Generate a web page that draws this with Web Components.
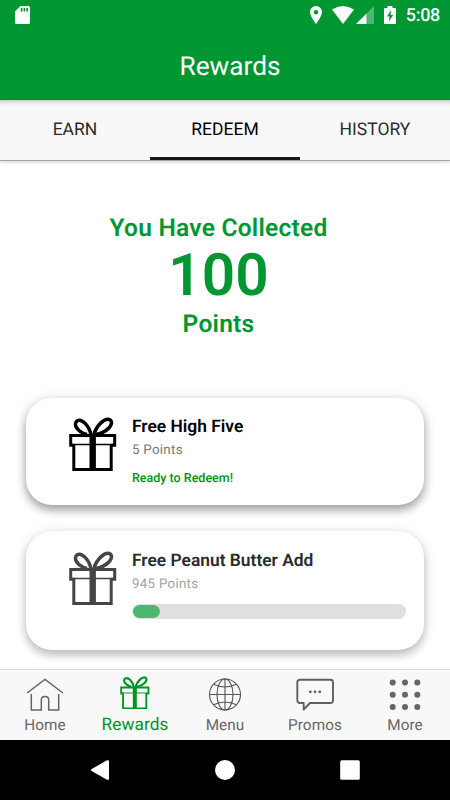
<!DOCTYPE html>
<html lang="en">
<head>
<meta charset="UTF-8">
<meta name="viewport" content="width=device-width, initial-scale=1">
<title>Rewards</title>
<style>
    body {
        margin: 0;
        background: #fff;
        font-family: Roboto, sans-serif;
        text-rendering: geometricPrecision;
    }
</style>
</head>
<body>
<rewards-app></rewards-app>

<script>
class GiftIcon extends HTMLElement {
    constructor() {
        super();
        this.attachShadow({ mode: 'open' });
        this.shadowRoot.innerHTML = `
            <style>
                :host { display: block; }
                svg { display: block; width: 100%; height: 100%; }
            </style>
            <svg viewBox="0 0 48 54" fill="none" stroke="currentColor">
                <path d="M4.8 28V52.4H42.2V28" stroke-width="3"/>
                <path d="M5 28.2H1.7V18.5H45.7V28.2H42.4" stroke-width="3"/>
                <path d="M3 27.4H45" stroke-width="1.5"/>
                <path d="M23.7 17V53" stroke-width="6.4"/>
                <path d="M22 18C20.5 9 13 1.4 8.3 3.8C3.5 7 8.5 15 18 17.5" stroke-width="3.5"/>
                <path d="M25 17.5C27 9 36 -.2 41.3 3C45.8 7.5 37 16 26.5 17.5" stroke-width="3.5"/>
            </svg>
        `;
    }
}

class StatusBar extends HTMLElement {
    constructor() {
        super();
        this.attachShadow({ mode: 'open' });
        this.shadowRoot.innerHTML = `
            <style>
                :host {
                    display: flex;
                    justify-content: space-between;
                    align-items: center;
                    height: 30px;
                    padding: 0 10px 0 15px;
                    color: #fff;
                }
                svg { display: block; }
                .right { display: flex; align-items: center; }
                .pin { margin-right: 10px; }
                .wifi { margin-right: 2px; }
                .signal { margin-right: 10px; }
                .battery { margin-right: 10px; }
                .time {
                    padding-top: 1px;
                    font-size: 18px;
                    font-weight: 500;
                    line-height: 31px;
                    letter-spacing: -0.3px;
                }
            </style>
            <svg width="15" height="18" viewBox="0 0 15 18">
                <path fill="#fff" fill-rule="evenodd" d="M5.5 0H13.5Q15 0 15 1.5V16.5Q15 18 13.5 18H1.5Q0 18 0 16.5V5.5ZM5.7 2V5.5H7.5V2ZM8.6 2V5.5H10.2V2ZM11.3 2V5.5H13V2Z"/>
            </svg>
            <div class="right">
                <svg class="pin" width="12" height="18" viewBox="0 0 12 18">
                    <path fill="#fff" fill-rule="evenodd" d="M6 0A6 6 0 0 0 0 6C0 10.3 6 18 6 18S12 10.3 12 6A6 6 0 0 0 6 0ZM6 4A2.2 2.2 0 1 1 6 8.4A2.2 2.2 0 0 1 6 4Z"/>
                </svg>
                <svg class="wifi" width="22" height="18" viewBox="0 0 22 18">
                    <path fill="#fff" d="M0 3.5Q11 -3.5 22 3.5L11 18Z"/>
                </svg>
                <svg class="signal" width="18" height="18" viewBox="0 0 18 18">
                    <path fill="#fff" fill-opacity=".3" d="M10.5 7.5L18 0V18H10.5Z"/>
                    <path fill="#fff" d="M0 18L10.5 7.5V18Z"/>
                </svg>
                <svg class="battery" width="12" height="18" viewBox="0 0 12 18">
                    <path fill="#fff" fill-rule="evenodd" d="M3.5 0H8.5V2H11Q12 2 12 3V17Q12 18 11 18H1Q0 18 0 17V3Q0 2 1 2H3.5ZM7 4L3 10.5H5.5L5 15.5L9.2 9H6.6Z"/>
                </svg>
                <span class="time">5:08</span>
            </div>
        `;
    }
}

class TabStrip extends HTMLElement {
    constructor() {
        super();
        this.attachShadow({ mode: 'open' });
        this.shadowRoot.innerHTML = `
            <style>
                :host {
                    display: grid;
                    grid-template-columns: repeat(3, 1fr);
                    height: 61px;
                    box-sizing: border-box;
                    border-bottom: 1px solid #a6a6a6;
                    background: linear-gradient(#c4cdc6, #e2e2e2 2px, #f0f0f0 4px, #f8f8f8 7px);
                    box-shadow: 0 1px 4px rgba(0, 0, 0, .2);
                    text-align: center;
                }
                ::slotted(*) {
                    box-sizing: border-box;
                    height: 60px;
                    padding-top: 2px;
                    font-size: 17.5px;
                    line-height: 56px;
                    color: #2c2c2c;
                }
                ::slotted(.active) {
                    color: #000;
                    border-bottom: 3px solid #17191c;
                }
            </style>
            <slot></slot>
        `;
    }
}

class PointsTotal extends HTMLElement {
    constructor() {
        super();
        this.attachShadow({ mode: 'open' });
        this.shadowRoot.innerHTML = `
            <style>
                :host {
                    display: block;
                    padding: 52px 13px 0 0;
                    text-align: center;
                    color: #009733;
                    font-weight: 600;
                }
                div { font-size: 24.5px; line-height: 30px; letter-spacing: .25px; }
                .total {
                    font-size: 58.5px;
                    line-height: 66px;
                    letter-spacing: 0;
                }
            </style>
            <div>You Have Collected</div>
            <div class="total"><slot></slot></div>
            <div>Points</div>
        `;
    }
}

class RewardCard extends HTMLElement {
    constructor() {
        super();
        this.attachShadow({ mode: 'open' });
        this.shadowRoot.innerHTML = `
            <style>
                :host {
                    display: flex;
                    box-sizing: border-box;
                    height: 107px;
                    padding: 19px 18px 0 43px;
                    border-radius: 26px;
                    background: #fff;
                    box-shadow: 0 5px 10px rgba(0, 0, 0, .34), 0 1px 14px rgba(0, 0, 0, .1);
                    color: #000;
                }
                :host([locked]) {
                    height: 119px;
                    padding-top: 20px;
                    color: #2b2b2b;
                    box-shadow: 0 5px 10px rgba(0, 0, 0, .23), 0 1px 14px rgba(0, 0, 0, .09);
                }
                gift-icon { width: 48px; height: 54px; margin-right: 15px; flex: none; }
                :host([locked]) gift-icon { color: #454545; }
                .info { flex: 1; margin-top: -1px; }
                .name { font-size: 17.4px; font-weight: 600; line-height: 23px; }
                .cost { font-size: 13.4px; line-height: 23px; letter-spacing: .25px; color: #777; }
                :host([locked]) .cost { color: #a3a3a3; }
            </style>
            <gift-icon></gift-icon>
            <div class="info">
                <div class="name"><slot name="name"></slot></div>
                <div class="cost"><slot name="cost"></slot></div>
                <slot></slot>
            </div>
        `;
    }
}

class ProgressBar extends HTMLElement {
    constructor() {
        super();
        this.attachShadow({ mode: 'open' });
        this.shadowRoot.innerHTML = `
            <style>
                :host {
                    display: block;
                    box-sizing: border-box;
                    height: 15px;
                    margin-top: 8px;
                    padding: 1px;
                    border-radius: 8px;
                    background: #e0e0e0;
                }
                div { width: 27px; height: 13px; border-radius: 7px; background: #4db772; }
            </style>
            <div></div>
        `;
    }
}

class NavItem extends HTMLElement {
    constructor() {
        super();
        this.attachShadow({ mode: 'open' });
        this.shadowRoot.innerHTML = `
            <style>
                :host {
                    display: flex;
                    flex-direction: column;
                    align-items: center;
                    color: #666;
                    font-size: 15.3px;
                    letter-spacing: .1px;
                }
                .icon {
                    display: flex;
                    align-items: center;
                    justify-content: center;
                    height: 36px;
                    margin-top: 7px;
                }
                .label { line-height: 22px; margin-top: 1px; }
                :host([active]) { color: #009326; font-size: 17.2px; }
                :host([active]) .icon { height: 33px; margin-top: 6px; }
                :host([active]) .label { margin-top: 5px; }
            </style>
            <div class="icon"><slot name="icon"></slot></div>
            <div class="label"><slot></slot></div>
        `;
    }
}

class SystemNav extends HTMLElement {
    constructor() {
        super();
        this.attachShadow({ mode: 'open' });
        this.shadowRoot.innerHTML = `
            <style>
                :host {
                    display: flex;
                    align-items: center;
                    justify-content: space-between;
                    height: 60px;
                    padding: 0 90px;
                    background: #000;
                }
            </style>
            <svg width="20" height="20" viewBox="0 0 20 20"><path fill="#fff" d="M1.7 9L17 .3Q19 -.3 19 1.5V18.5Q19 20.3 17 19.7L1.7 11Q.2 10 1.7 9Z"/></svg>
            <svg width="20" height="20" viewBox="0 0 20 20"><circle cx="10" cy="10" r="10" fill="#fff"/></svg>
            <svg width="20" height="20" viewBox="0 0 20 20"><rect x=".2" y=".2" width="19.6" height="19.6" rx="1.5" fill="#fff"/></svg>
        `;
    }
}

class RewardsApp extends HTMLElement {
    constructor() {
        super();
        this.attachShadow({ mode: 'open' });
        this.shadowRoot.innerHTML = `
            <style>
                :host {
                    display: flex;
                    flex-direction: column;
                    height: 800px;
                    overflow: hidden;
                }
                header { flex: none; height: 100px; background: #009733; }
                h1 {
                    margin: 0;
                    padding: 18px 0 0 10px;
                    color: #fff;
                    font-size: 26.2px;
                    font-weight: 400;
                    line-height: 38px;
                    text-align: center;
                }
                tab-strip { flex: none; }
                main { flex: 1; min-height: 0; overflow: hidden; }
                .cards {
                    display: flex;
                    flex-direction: column;
                    gap: 26px;
                    padding: 59px 26px 0;
                }
                .cards reward-card { flex: none; }
                .ready {
                    margin-top: 8px;
                    font-size: 12.5px;
                    font-weight: 500;
                    line-height: 18px;
                    color: #009320;
                }
                nav {
                    flex: none;
                    display: grid;
                    grid-template-columns: repeat(5, 1fr);
                    box-sizing: border-box;
                    height: 71px;
                    border-top: 1px solid #dcdcdc;
                    background: #f8f8f8;
                }
                nav gift-icon { width: 30px; height: 33.5px; }
                system-nav { flex: none; }
            </style>
            <header>
                <status-bar></status-bar>
                <h1>Rewards</h1>
            </header>
            <tab-strip>
                <div>EARN</div>
                <div class="active">REDEEM</div>
                <div>HISTORY</div>
            </tab-strip>
            <main>
                <points-total>100</points-total>
                <div class="cards">
                    <reward-card>
                        <span slot="name">Free High Five</span>
                        <span slot="cost">5 Points</span>
                        <div class="ready">Ready to Redeem!</div>
                    </reward-card>
                    <reward-card locked>
                        <span slot="name">Free Peanut Butter Add</span>
                        <span slot="cost">945 Points</span>
                        <progress-bar></progress-bar>
                    </reward-card>
                </div>
            </main>
            <nav>
                <nav-item>
                    <svg slot="icon" width="38" height="34" viewBox="0 0 38 34" fill="none" stroke="#666" stroke-width="1.5">
                        <path d="M1 15L19 1.5L37 15"/>
                        <path d="M5.3 16V32H15.3V22Q15.3 18.5 19 18.5T22.7 22V32H32.7V16"/>
                    </svg>
                    Home
                </nav-item>
                <nav-item active><gift-icon slot="icon"></gift-icon>Rewards</nav-item>
                <nav-item>
                    <svg slot="icon" width="34" height="34" viewBox="0 0 34 34" fill="none" stroke="#555" stroke-width="1.1">
                        <circle cx="17" cy="16.5" r="15.5"/>
                        <ellipse cx="17" cy="16.5" rx="8" ry="15.5"/>
                        <path d="M17 1V32M1.5 16.5H32.5M5.5 6.3Q17 11.6 28.5 6.3M5.5 26.7Q17 21.4 28.5 26.7"/>
                    </svg>
                    Menu
                </nav-item>
                <nav-item>
                    <svg slot="icon" width="38" height="34" viewBox="0 0 38 34" fill="none" stroke="#606060" stroke-width="1.9" stroke-linejoin="round">
                        <path d="M4 1.7H34.5Q37 1.7 37 4.2V22.5Q37 25 34.5 25H14L7.7 31.5V25H4Q1.3 25 1.3 22.5V4.2Q1.3 1.7 4 1.7Z"/>
                        <g fill="#606060" stroke="none">
                            <circle cx="14.3" cy="13.8" r="1.4"/><circle cx="19" cy="13.8" r="1.4"/><circle cx="23.8" cy="13.8" r="1.4"/>
                        </g>
                    </svg>
                    Promos
                </nav-item>
                <nav-item>
                    <svg slot="icon" width="32" height="32" viewBox="0 0 32 32" fill="#666">
                        <circle cx="3.7" cy="3.5" r="3"/><circle cx="16" cy="3.5" r="3"/><circle cx="28.3" cy="3.5" r="3"/>
                        <circle cx="3.7" cy="15.8" r="3"/><circle cx="16" cy="15.8" r="3"/><circle cx="28.3" cy="15.8" r="3"/>
                        <circle cx="3.7" cy="28.1" r="3"/><circle cx="16" cy="28.1" r="3"/><circle cx="28.3" cy="28.1" r="3"/>
                    </svg>
                    More
                </nav-item>
            </nav>
            <system-nav></system-nav>
        `;
    }
}

// Define the custom elements
customElements.define('gift-icon', GiftIcon);
customElements.define('status-bar', StatusBar);
customElements.define('tab-strip', TabStrip);
customElements.define('points-total', PointsTotal);
customElements.define('reward-card', RewardCard);
customElements.define('progress-bar', ProgressBar);
customElements.define('nav-item', NavItem);
customElements.define('system-nav', SystemNav);
customElements.define('rewards-app', RewardsApp);
</script>
</body>
</html>
